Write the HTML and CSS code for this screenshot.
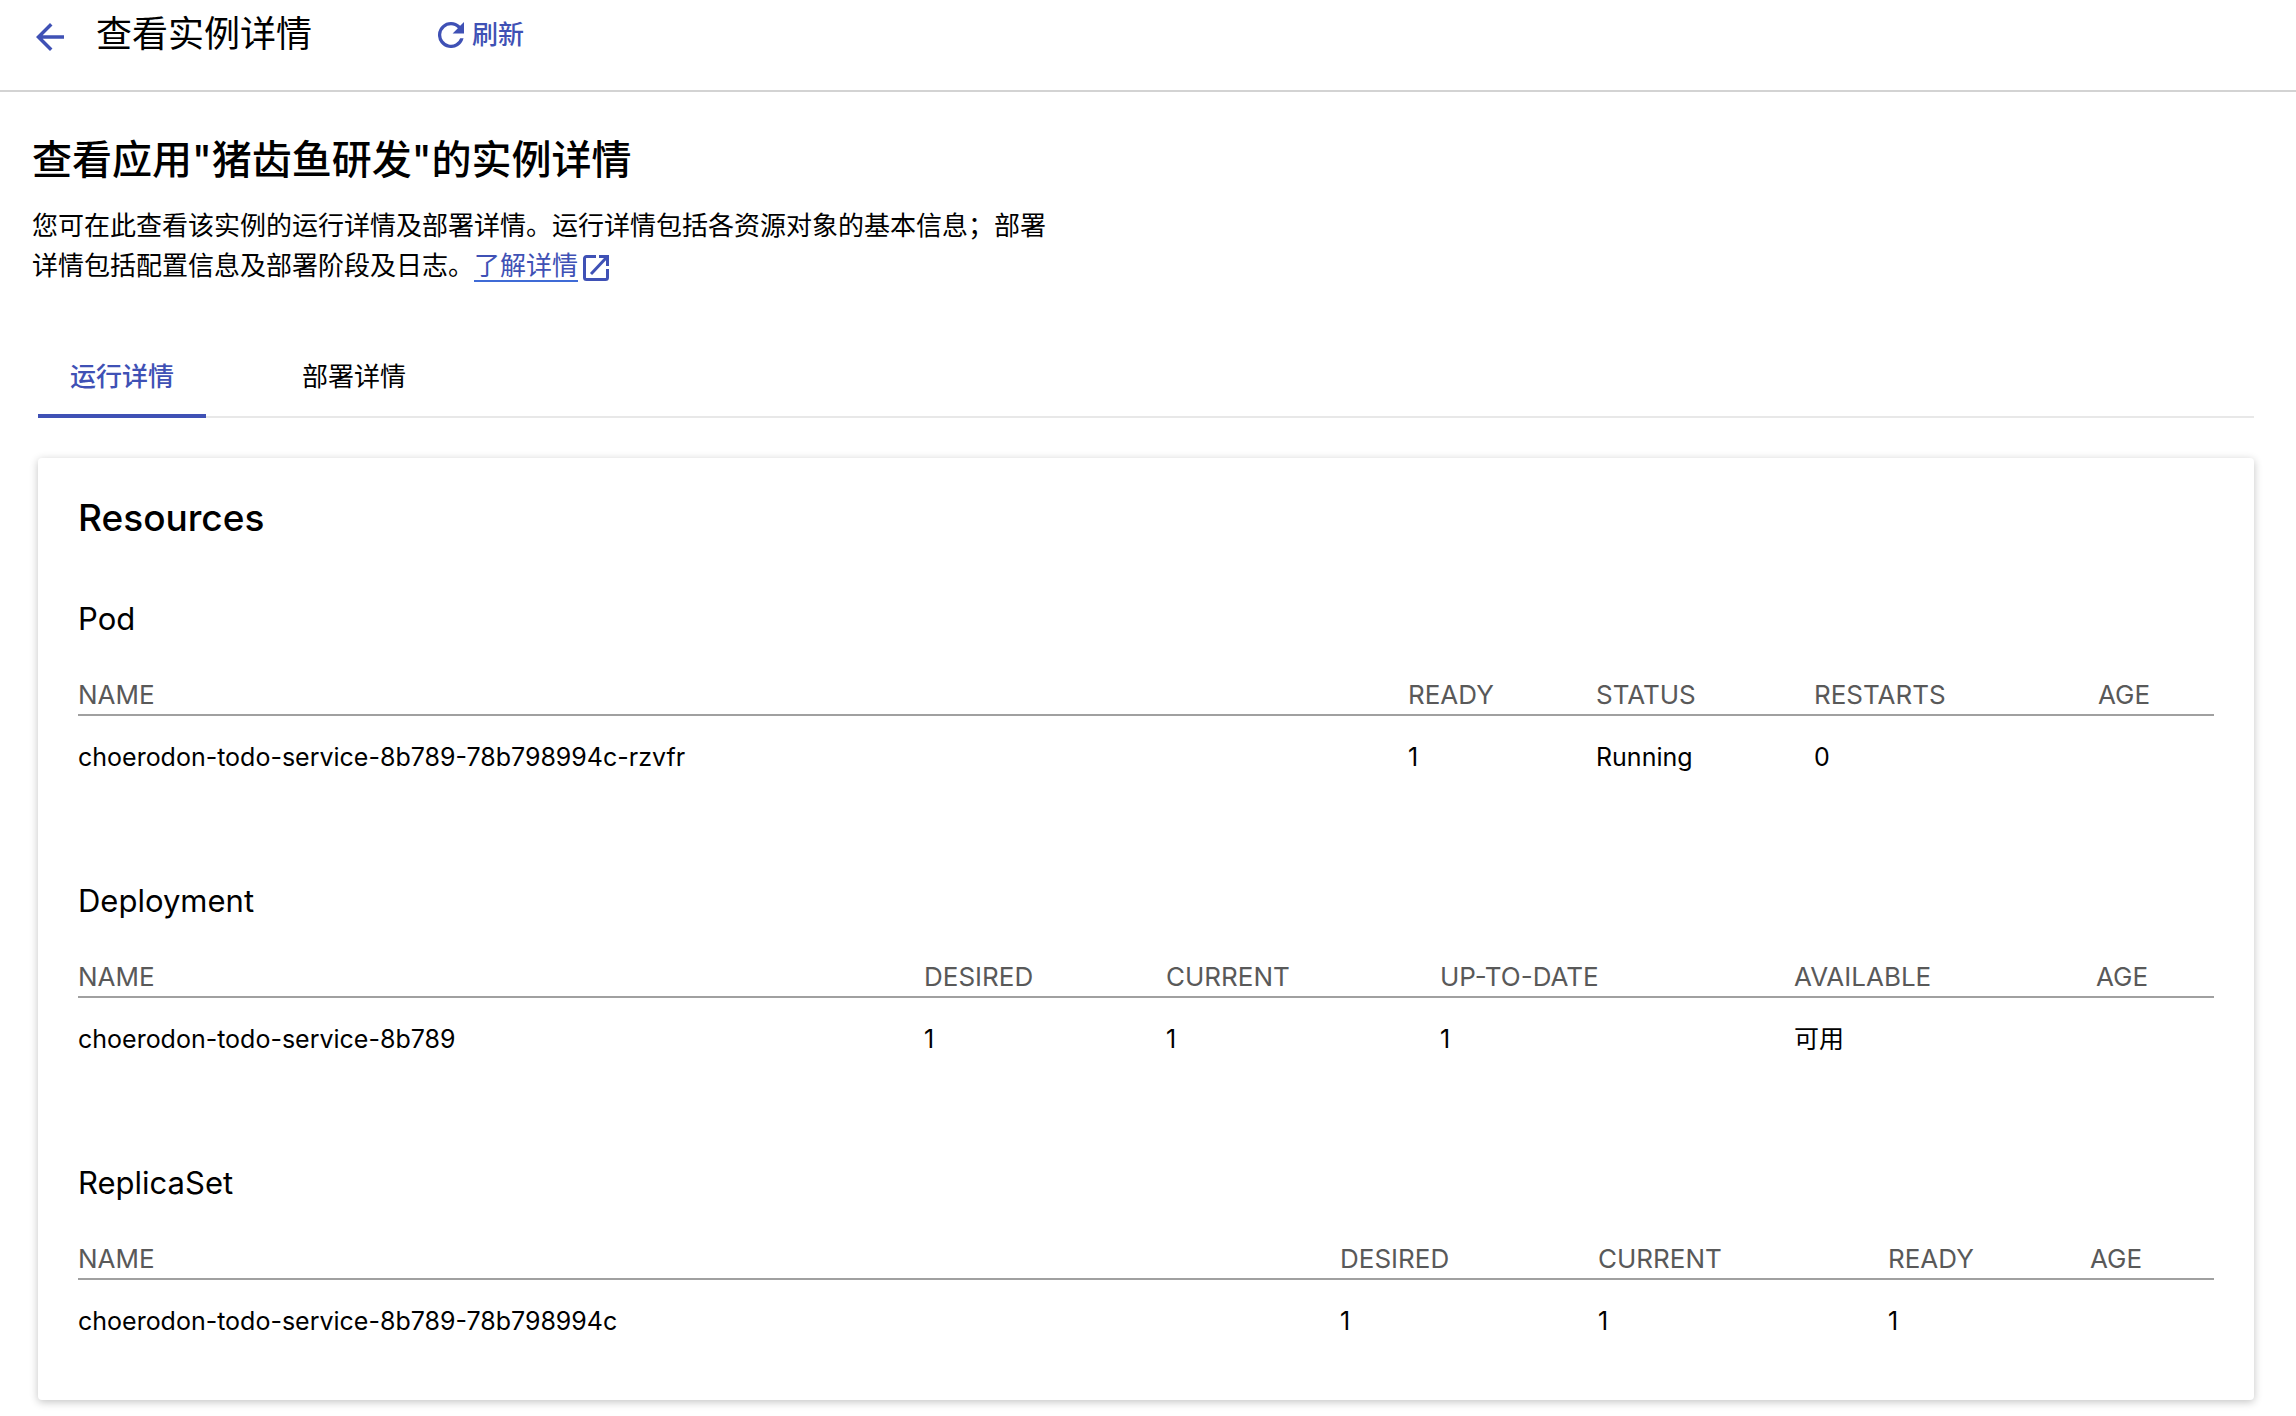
FILE: index.html
```html
<!DOCTYPE html>
<html lang="zh-CN">
<head>
<meta charset="utf-8">
<title>查看实例详情</title>
<link rel="stylesheet" href="styles.css">
</head>
<body>
<header class="page-header">
  <button class="back" type="button" aria-label="返回">
    <svg class="back-icon" viewBox="4 4 16 16" aria-hidden="true"><path d="M20 11H7.83l5.59-5.59L12 4l-8 8 8 8 1.41-1.41L7.83 13H20v-2z"/></svg>
  </button>
  <span class="page-title">查看实例详情</span>
  <button class="refresh" type="button">
    <svg class="refresh-icon" viewBox="4 4 16 16" aria-hidden="true"><path d="M17.65 6.35A7.96 7.96 0 0 0 12 4a8 8 0 1 0 7.73 10h-2.08A6 6 0 1 1 12 6c1.66 0 3.14.69 4.22 1.78L13 11h7V4l-2.35 2.35z"/></svg>
    刷新
  </button>
</header>
<main class="content">
  <h1 class="heading">查看应用"猪齿鱼研发"的实例详情</h1>
  <p class="description">您可在此查看该实例的运行详情及部署详情。运行详情包括各资源对象的基本信息；部署详情包括配置信息及部署阶段及日志。<a class="more" href="#docs"><span class="more-text">了解详情</span><svg class="more-icon" viewBox="0 0 28 28" aria-hidden="true"><path fill="none" stroke="currentColor" stroke-width="3" d="M14 2.500H4.500a2 2 0 0 0-2 2v19a2 2 0 0 0 2 2h19a2 2 0 0 0 2-2V15"/><path fill="none" stroke="currentColor" stroke-width="3" d="M9 20 25 3"/><path d="M17 1h10v11h-3V4h-7z"/></svg></a></p>
  <div class="tabs" role="tablist">
    <button class="tab tab-active" type="button" role="tab" aria-selected="true">运行详情</button>
    <button class="tab" type="button" role="tab" aria-selected="false">部署详情</button>
  </div>
  <section class="card">
    <h2 class="card-title">Resources</h2>
    <div class="resources">
      <section class="resource">
        <h3 class="resource-title">Pod</h3>
        <table class="table">
          <colgroup><col><col class="w188"><col class="w218"><col class="w284"><col class="w116"></colgroup>
          <thead><tr><th>NAME</th><th>READY</th><th>STATUS</th><th>RESTARTS</th><th>AGE</th></tr></thead>
          <tbody><tr><td>choerodon-todo-service-8b789-78b798994c-rzvfr</td><td>1</td><td>Running</td><td>0</td><td></td></tr></tbody>
        </table>
      </section>
      <section class="resource">
        <h3 class="resource-title">Deployment</h3>
        <table class="table">
          <colgroup><col><col class="w242"><col class="w274"><col class="w354"><col class="w302"><col class="w118"></colgroup>
          <thead><tr><th>NAME</th><th>DESIRED</th><th>CURRENT</th><th>UP-TO-DATE</th><th>AVAILABLE</th><th>AGE</th></tr></thead>
          <tbody><tr><td>choerodon-todo-service-8b789</td><td>1</td><td>1</td><td>1</td><td>可用</td><td></td></tr></tbody>
        </table>
      </section>
      <section class="resource">
        <h3 class="resource-title">ReplicaSet</h3>
        <table class="table">
          <colgroup><col><col class="w258"><col class="w290"><col class="w202"><col class="w124"></colgroup>
          <thead><tr><th>NAME</th><th>DESIRED</th><th>CURRENT</th><th>READY</th><th>AGE</th></tr></thead>
          <tbody><tr><td>choerodon-todo-service-8b789-78b798994c</td><td>1</td><td>1</td><td>1</td><td></td></tr></tbody>
        </table>
      </section>
    </div>
  </section>
</main>
</body>
</html>
```
FILE: styles.css
```css
* { box-sizing: border-box; }

body {
  margin: 0;
  background: #fff;
  color: #000;
  font-family: Inter, "Noto Sans CJK SC", sans-serif;
  font-size: 26px;
  line-height: 40px;
}

button {
  padding: 0;
  border: 0;
  background: none;
  color: inherit;
  font: inherit;
  cursor: pointer;
}

.page-header {
  display: flex;
  align-items: center;
  height: 92px;
  padding: 0 36px 22px;
  border-bottom: 2px solid #d3d3d3;
}

.back {
  display: flex;
  margin-right: 32px;
  padding-top: 6px;
  color: #3f51b5;
}

.back-icon { width: 28px; height: 28px; fill: currentColor; }

.page-title {
  margin-right: 126px;
  font-size: 36px;
}

.refresh {
  display: flex;
  align-items: center;
  gap: 8px;
  padding-top: 2px;
  color: #3f51b5;
  font-weight: 500;
}

.refresh-icon { width: 26px; height: 26px; fill: currentColor; }

.content { padding: 40px 42px 16px 32px; }

.heading {
  margin: 0 0 18px;
  font-size: 40px;
  font-weight: 500;
  line-height: 56px;
}

.description {
  max-width: 1034px;
  margin: 0;
}

.more {
  display: inline-flex;
  align-items: flex-end;
  gap: 4px;
  height: 40px;
  padding-bottom: 4px;
  color: #3f51b5;
  text-decoration: none;
  vertical-align: bottom;
}

.more-text {
  border-bottom: 2px solid #3f6bd6;
  line-height: 28px;
}

.more-icon {
  width: 28px;
  height: 28px;
  fill: currentColor;
}

.tabs {
  display: flex;
  gap: 64px;
  margin: 50px 0 40px 6px;
  box-shadow: inset 0 -2px #e8e8e8;
}

.tab {
  width: 168px;
  height: 82px;
  padding-top: 4px;
  border-bottom: 4px solid transparent;
}

.tab-active {
  border-color: #3f51b5;
  color: #3f51b5;
  font-weight: 500;
}

.card {
  margin-left: 6px;
  padding: 32px 40px 38px;
  border-radius: 4px;
  background: #fff;
  box-shadow: 0 2px 8px rgba(0, 0, 0, 0.24);
}

.card-title {
  margin: 0 0 50px;
  font-size: 37px;
  font-weight: 500;
  line-height: 56px;
}

.resources {
  display: flex;
  flex-direction: column;
  gap: 80px;
}

.resource-title {
  margin: 0 0 34px;
  font-size: 31px;
  font-weight: 400;
  line-height: 46px;
}

.table {
  width: 100%;
  border-spacing: 0;
  table-layout: fixed;
}

.table th,
.table td {
  padding: 0;
  font-weight: 400;
  text-align: left;
}

.table th {
  border-bottom: 2px solid #a0a0a0;
  color: #595959;
  line-height: 38px;
}

.table td {
  padding: 21px 0;
  font-size: 25px;
}

.w116 { width: 116px; }
.w118 { width: 118px; }
.w124 { width: 124px; }
.w188 { width: 188px; }
.w202 { width: 202px; }
.w218 { width: 218px; }
.w242 { width: 242px; }
.w258 { width: 258px; }
.w274 { width: 274px; }
.w284 { width: 284px; }
.w290 { width: 290px; }
.w302 { width: 302px; }
.w354 { width: 354px; }
```
